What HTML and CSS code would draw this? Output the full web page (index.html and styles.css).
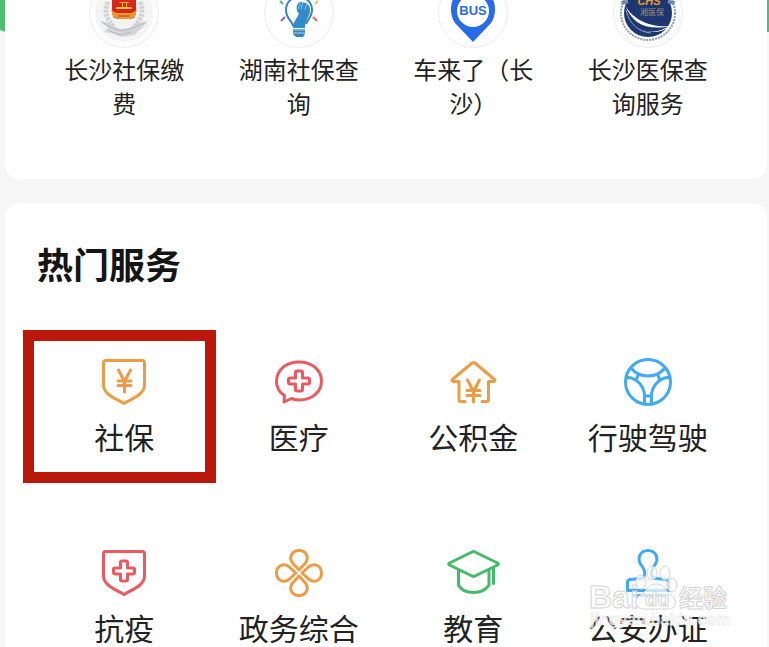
FILE: index.html
```html
<!DOCTYPE html>
<html lang="zh-CN">
<head>
<meta charset="utf-8">
<meta name="viewport" content="width=device-width, initial-scale=1">
<title>热门服务</title>
<link rel="stylesheet" href="styles.css">
</head>
<body>
<main class="page">
  <nav class="card apps" aria-label="应用">
    <a class="app" href="#">
      <svg class="app-icon" viewBox="0 22 70 48" aria-hidden="true">
        <circle class="disc" cx="35" cy="35" r="34.5"/>
        <circle cx="35" cy="35" r="29" fill="#f4f4f4"/>
        <path d="M19 24c-4 8-2 17 6 25M51 24c4 8 2 17-6 25" fill="none" stroke="#d2d3d5" stroke-width="5" stroke-dasharray="3 1"/>
        <path d="M11 43l8 2 12 6 9-1 8-5 11-2-5 6-9 8-12 2-11-4-7-1 4-4z" fill="#d4d6d8"/>
        <path d="M13 44l12 7 8 2 10-3 13-5M20 53l12 4 10-3" fill="none" stroke="#b4b8ba" stroke-width="1"/>
        <path d="M23 20h24v15l-2 5-5 1H30l-5-1-2-5z" fill="#d9251c"/>
        <path d="M22 31q3 4 7 4h12q4 0 7-4l-2 8-6 2H30l-6-2z" fill="#e79a32"/>
        <path d="M27 29h16v2H27zM30 24h10v1H30zM33 25h1v4h-1zM37 25h1v4h-1z" fill="#f2bc3d"/>
        <path d="M29 38h12" stroke="#c73820" stroke-width="1"/>
      </svg>
      <span class="app-name">长沙社保缴费</span>
    </a>
    <a class="app" href="#">
      <svg class="app-icon" viewBox="0 22 70 48" aria-hidden="true">
        <circle class="disc" cx="35" cy="35" r="34.5"/>
        <path d="M29 48c0-4-7-7-7-16 0-7 5-13 13-13s13 6 13 13c0 7-5 10-6 14" fill="none" stroke="#3484c4" stroke-width="2"/>
        <path d="M33 33c-1-4 0-8 3-9l6 1c4 2 5 8 3 12-2 5-4 7-4 13H29c0-6 4-10 6-14z" fill="#328ac9"/>
        <path d="M34 31l2-6M37 31l2-7M41 31l2-6" stroke="#82cbea" stroke-width="1" stroke-linecap="round"/>
        <path d="M29 51h12v5l-2 3h-7l-3-3z" fill="#3286be"/>
        <path d="M29 52h12M29 55h12" stroke="#a8d8ea" stroke-width="1"/>
        <path d="M16 23l3 3" stroke="#58b976" stroke-width="2"/>
        <path d="M51 26l3-3" stroke="#e4cf59" stroke-width="2"/>
        <path d="M17 43l4-4" stroke="#7c6aa2" stroke-width="2"/>
        <path d="M49 39l4 4" stroke="#e36b62" stroke-width="2"/>
      </svg>
      <span class="app-name">湖南社保查询</span>
    </a>
    <a class="app" href="#">
      <svg class="app-icon" viewBox="0 22 70 48" aria-hidden="true">
        <circle class="disc" cx="35" cy="35" r="34.5"/>
        <path d="M35 64L17 45C8 32 14 9 35 9s27 23 18 36z" fill="#276bea"/>
        <circle cx="35" cy="33" r="16" fill="#fff"/>
        <text class="bus" x="35" y="37" text-anchor="middle">BUS</text>
      </svg>
      <span class="app-name">车来了（长沙）</span>
    </a>
    <a class="app" href="#">
      <svg class="app-icon" viewBox="0 22 70 48" aria-hidden="true">
        <circle class="disc" cx="35" cy="35" r="34.5"/>
        <circle cx="35" cy="35" r="27" fill="none" stroke="#8e9bb5" stroke-width="2" stroke-dasharray="2 1"/>
        <circle cx="35" cy="35" r="24" fill="#1c3670"/>
        <path d="M8 23l6-1 2 3-7 2zM62 23l-6-1-2 3 7 2z" fill="#7089ad"/>
        <path d="M12 27c7 14 25 23 46 21-24 5-39-2-46-21zM28 52c12 3 22 1 29-5-6 8-17 8-29 5z" fill="#fff"/>
        <path d="M13 32c3 14 13 22 25 23" fill="none" stroke="#95a8ca" stroke-width="1"/>
        <text class="chs" x="36" y="27" text-anchor="middle">CHS</text>
        <text class="chs-name" x="39" y="37" text-anchor="middle">湘医保</text>
      </svg>
      <span class="app-name">长沙医保查询服务</span>
    </a>
  </nav>

  <section class="card services" aria-labelledby="hot">
    <h2 class="title" id="hot">热门服务</h2>
    <div class="grid">
      <a class="service selected" href="#">
        <svg class="icon orange" viewBox="0 0 56 56" aria-hidden="true">
          <path d="M10 6.500H46Q48.500 6.500 48.500 9V31C48.500 41 35 45 28 49.500C21 45 7.500 41 7.500 31V9Q7.500 6.500 10 6.500Z"/>
          <path d="M22.500 16l6 11.500 6-11.500M28.500 27.500v10.500M22 27h13M22 31.500h13"/>
        </svg>
        <span class="label">社保</span>
      </a>
      <a class="service" href="#">
        <svg class="icon red" viewBox="0 0 56 56" aria-hidden="true">
          <path d="M13.500 41.500C7.500 38 5.500 33 5.500 27.500C5.500 16 15 8 28 8s22.500 8 22.500 19S41 46 28 46q-4 0-7.500-1.500L13 48Z"/>
          <path d="M26 17h4q1.500 0 1.500 1.500V24h5.500q1.500 0 1.500 1.500v3q0 1.500-1.500 1.500H31.500V35.500q0 1.500-1.500 1.500h-4q-1.500 0-1.500-1.500v-5.500H19q-1.500 0-1.500-1.500v-3q0-1.500 1.500-1.500h5.500v-5.500Q24.500 17 26 17Z"/>
        </svg>
        <span class="label">医疗</span>
      </a>
      <a class="service" href="#">
        <svg class="icon orange" viewBox="0 0 56 56" aria-hidden="true">
          <path d="M20 47.500H16Q14 47.500 14 45.500V27.500H8Q6 26.500 8 25L26.500 9.500Q28.500 8 30.500 9.500L49 25Q51 26.500 49 27.500H43.500V45.500Q43.500 47.500 41.500 47.500H37"/>
          <path d="M22.500 26l6 11.500 6-11.500M28.500 37.500v10.500M22 36.500h13M22 41.500h13"/>
        </svg>
        <span class="label">公积金</span>
      </a>
      <a class="service" href="#">
        <svg class="icon blue" viewBox="0 0 56 56" aria-hidden="true">
          <circle cx="28" cy="28" r="22.500"/>
          <path d="M11.500 14.500C16 20 22 22 28 22s12-2 16.500-7.500M6.500 23.500C16 23 24.500 32 24.500 42V50M49.500 23.500C40 23 31.500 32 31.500 42V50M18.500 20l-2 5.500M37.500 20l2 5.500M24.500 42h7"/>
        </svg>
        <span class="label">行驶驾驶</span>
      </a>
      <a class="service" href="#">
        <svg class="icon red" viewBox="0 0 56 56" aria-hidden="true">
          <path d="M10 6.500H46Q48.500 6.500 48.500 9V31C48.500 41 35 45 28 49.500C21 45 7.500 41 7.500 31V9Q7.500 6.500 10 6.500Z"/>
          <path d="M26 16h4q1.500 0 1.500 1.500V23h5.500q1.500 0 1.500 1.500v3q0 1.500-1.500 1.500H31.500V34.500q0 1.500-1.500 1.500h-4q-1.500 0-1.500-1.500v-5.500H19q-1.500 0-1.500-1.500v-3q0-1.500 1.500-1.500h5.500v-5.500Q24.500 16 26 16Z"/>
        </svg>
        <span class="label">抗疫</span>
      </a>
      <a class="service" href="#">
        <svg class="icon orange" viewBox="0 0 56 56" aria-hidden="true">
          <path id="petal" d="M28 25L22 18.500C17 12.500 21 5.500 28 5.500s11 7 6 13Z"/>
          <use href="#petal" transform="rotate(90 28 28)"/>
          <use href="#petal" transform="rotate(180 28 28)"/>
          <use href="#petal" transform="rotate(270 28 28)"/>
        </svg>
        <span class="label">政务综合</span>
      </a>
      <a class="service" href="#">
        <svg class="icon green" viewBox="0 0 56 56" aria-hidden="true">
          <path d="M4.500 18L27 7Q28.500 6 30 7L52.500 18Q54 19 52.500 20L30 31Q28.500 32 27 31L4.500 20Q3 19 4.500 18Z"/>
          <path d="M13.500 25.500V40C16 45 22 47.500 28.500 47.500S41 45 44 40V25.500M48.500 22.500v16"/>
        </svg>
        <span class="label">教育</span>
      </a>
      <a class="service" href="#">
        <svg class="icon blue" viewBox="0 0 56 56" aria-hidden="true">
          <path d="M24.500 30C25.500 27 24 24 22 21C16 14 20 5.500 28 5.500s12 8.500 6 15.500C32 24 30.500 27 31.500 30Q32.500 33.500 36 33.500L46 34.500Q48.500 35 48.500 37.500V45.500H7.500V37.500Q7.500 35 10 34.500L20 33.500Q23.500 33.500 24.500 30Z"/>
          <path d="M14 50.500H44"/>
        </svg>
        <span class="label">公安办证</span>
      </a>
    </div>
  </section>

  <svg class="watermark" viewBox="0 0 142 68" aria-hidden="true">
    <g class="mark">
      <text class="mark-latin" x="1" y="46">Bai</text>
      <ellipse cx="53" cy="20" rx="5" ry="7"/>
      <ellipse cx="64" cy="11" rx="5" ry="7"/>
      <ellipse cx="77" cy="11" rx="5" ry="7"/>
      <ellipse cx="84" cy="23" rx="5" ry="7"/>
      <path d="M68 22C58 22 60 30 52 33C43 40 49 48 58 47H78C88 48 91 39 83 33C77 29 77 22 68 22Z"/>
      <text class="mark-du" x="57" y="44">du</text>
      <text class="mark-han" x="91" y="45">经验</text>
    </g>
    <text class="mark-url" x="2" y="63">jingyan.baidu.com</text>
  </svg>
</main>
</body>
</html>
```
FILE: styles.css
```css
* {
  box-sizing: border-box;
}

body {
  margin: 0;
  background: #f6f6f6;
  color: #222;
  font-family: "Noto Sans CJK SC", sans-serif;
}

.page {
  position: relative;
  display: flex;
  flex-direction: column;
  gap: 24px;
  height: 100vh;
  padding: 0 2px 0 5px;
  overflow: hidden;
}

/* Bottom edge of the green header behind the first card */
.page::before {
  content: "";
  position: absolute;
  inset: 0 0 auto;
  height: 32px;
  background: #4fbd70;
  border-radius: 0 0 0 8px / 0 0 0 3px;
}

.card {
  position: relative;
  flex: none;
  padding: 0 32px;
  background: #fff;
  border-radius: 14px;
}

.apps,
.grid {
  display: grid;
  grid-template-columns: repeat(4, 1fr);
}

.apps {
  padding-bottom: 59px;
  border-radius: 0 0 14px 14px;
}

.app,
.service {
  display: flex;
  flex-direction: column;
  align-items: center;
  color: inherit;
  text-decoration: none;
}

.app {
  gap: 4px;
}

.app-icon {
  width: 70px;
  height: 48px;
}

.disc {
  fill: #fefefe;
  stroke: #ececec;
}

.app-name {
  width: 130px;
  font-size: 24px;
  line-height: 34px;
  text-align: center;
}

.bus {
  fill: #2a6be0;
  font: 700 13px "Liberation Sans", sans-serif;
}

.chs {
  fill: #f09a2c;
  font: italic 700 11px "Liberation Sans", sans-serif;
}

.chs-name {
  fill: #a98a72;
  font-size: 8px;
}

.services {
  padding-top: 36px;
  padding-bottom: 64px;
}

.title {
  margin: 0 0 67px;
  color: #151515;
  font-size: 36px;
  font-weight: 700;
  line-height: 48px;
}

.grid {
  row-gap: 89px;
}

.service {
  position: relative;
  gap: 6px;
}

.selected::after {
  content: "";
  position: absolute;
  inset: -24px -4px -27px -14px;
  border: 11px solid #bb180b;
}

.icon {
  width: 56px;
  height: 56px;
  fill: none;
  stroke: currentColor;
  stroke-width: 3;
  stroke-linecap: round;
  stroke-linejoin: round;
}

.orange {
  color: #ed9c45;
}

.red {
  color: #ec5960;
}

.blue {
  color: #3eabf3;
}

.green {
  color: #43bb68;
}

.label {
  font-size: 30px;
  line-height: 40px;
  white-space: nowrap;
}

.watermark {
  position: absolute;
  right: 39px;
  bottom: 17px;
  width: 142px;
  height: 68px;
  pointer-events: none;
}

.mark {
  fill: #fff;
  fill-opacity: 0.7;
  stroke: #d4d4d4;
  stroke-width: 1;
}

.mark-latin {
  font: 700 32px "Liberation Sans", sans-serif;
}

.mark-du {
  font: 700 20px "Liberation Sans", sans-serif;
}

.mark-han {
  font-size: 24px;
  font-weight: 700;
}

.mark-url {
  fill: #fff;
  fill-opacity: 0.75;
  stroke: #ddd;
  stroke-opacity: 0.5;
  font: 700 16px "Liberation Sans", sans-serif;
}
```
